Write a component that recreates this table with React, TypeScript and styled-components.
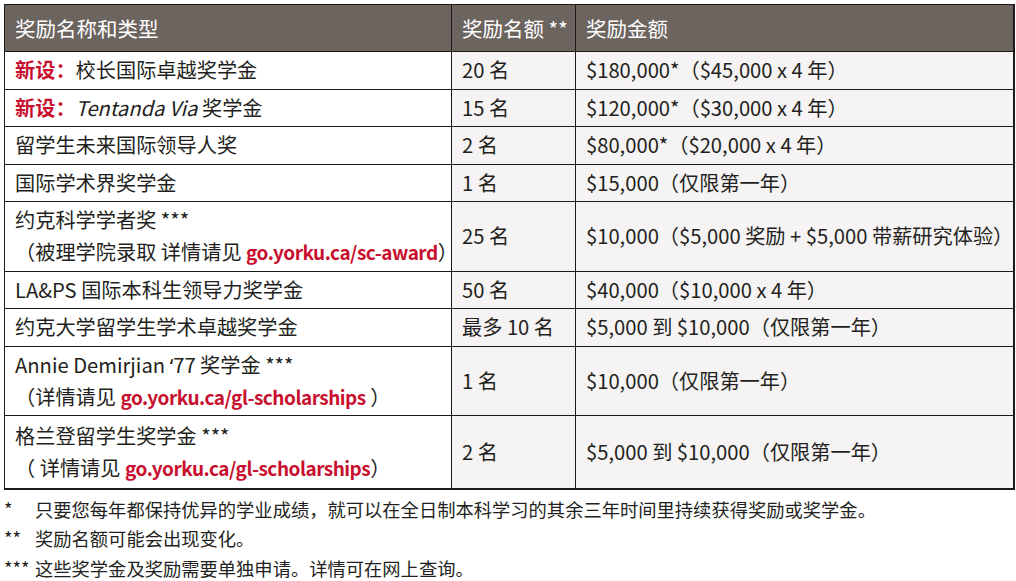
import React from "react";
import styled, { createGlobalStyle } from "styled-components";

const GlobalStyle = createGlobalStyle`
  html, body {
    margin: 0;
    padding: 0;
    background: #ffffff;
  }
  body {
    font-family: "Noto Sans CJK SC", "Noto Sans", sans-serif;
    color: #231f20;
  }
`;

const StPage = styled.main`
  padding: 4px 3px 0 4px;
`;

const StTable = styled.table`
  width: 1009px;
  border-collapse: collapse;
  table-layout: fixed;
  border-right: 2px solid #1d1a19;
  border-bottom: 2px solid #1d1a19;
`;

const StHeadCell = styled.th`
  background: #6c645f;
  color: #ffffff;
  font-weight: 400;
  font-size: 20.5px;
  line-height: 30px;
  text-align: left;
  padding: 8px 10px 8px 10px;
  border: 1px solid #1d1a19;
  white-space: nowrap;
`;

const StCell = styled.td<{ $shade?: boolean }>`
  background: ${(p) => (p.$shade ? "#f5f3f3" : "#ffffff")};
  font-size: 20.2px;
  line-height: 32px;
  padding: 2.25px 10px 2.25px 10px;
  border: 1px solid #1d1a19;
  vertical-align: middle;
  white-space: nowrap;
`;

const StNew = styled.span`
  color: #c8102e;
  font-weight: 700;
`;

const StLink = styled.span`
  color: #c8102e;
  font-weight: 700;
  font-size: 19px;
  letter-spacing: -0.5px;
`;

const StItalic = styled.em`
  font-style: italic;
`;

// latin quote mark, so it doesn't take a full-width CJK glyph
const StQuote = styled.span`
  font-family: "Noto Sans", sans-serif;
`;

const StLine = styled.div``;

const StNotes = styled.section`
  margin-top: 5px;
  display: flex;
  flex-direction: column;
`;

const StNote = styled.div`
  display: flex;
  font-size: 18.3px;
  line-height: 29.5px;
`;

const StMark = styled.span`
  width: 31px;
  flex: none;
`;

type Row = {
  name: React.ReactNode;
  count: string;
  amount: string;
  tall?: number;
};

const rows: Row[] = [
  {
    name: (
      <>
        <StNew>新设：</StNew>校长国际卓越奖学金
      </>
    ),
    count: "20 名",
    amount: "$180,000*（$45,000 x 4 年）",
  },
  {
    name: (
      <>
        <StNew>新设：</StNew>
        <StItalic>Tentanda Via</StItalic> 奖学金
      </>
    ),
    count: "15 名",
    amount: "$120,000*（$30,000 x 4 年）",
  },
  { name: "留学生未来国际领导人奖", count: "2 名", amount: "$80,000*（$20,000 x 4 年）" },
  { name: "国际学术界奖学金", count: "1 名", amount: "$15,000（仅限第一年）" },
  {
    name: (
      <>
        <StLine>约克科学学者奖 ***</StLine>
        <StLine>
          （被理学院录取 详情请见 <StLink>go.yorku.ca/sc-award</StLink>）
        </StLine>
      </>
    ),
    count: "25 名",
    amount: "$10,000（$5,000 奖励 + $5,000 带薪研究体验）",
  },
  { name: "LA&PS 国际本科生领导力奖学金", count: "50 名", amount: "$40,000（$10,000 x 4 年）" },
  { name: "约克大学留学生学术卓越奖学金", count: "最多 10 名", amount: "$5,000 到 $10,000（仅限第一年）" },
  {
    name: (
      <>
        <StLine>
          Annie Demirjian <StQuote>‘</StQuote>77 奖学金 ***
        </StLine>
        <StLine>
          （详情请见 <StLink>go.yorku.ca/gl-scholarships</StLink> ）
        </StLine>
      </>
    ),
    count: "1 名",
    amount: "$10,000（仅限第一年）",
  },
  {
    name: (
      <>
        <StLine>格兰登留学生奖学金 ***</StLine>
        <StLine>
          （ 详情请见 <StLink>go.yorku.ca/gl-scholarships</StLink>）
        </StLine>
      </>
    ),
    count: "2 名",
    amount: "$5,000 到 $10,000（仅限第一年）",
    tall: 73,
  },
];

const notes = [
  { mark: "*", text: "只要您每年都保持优异的学业成绩，就可以在全日制本科学习的其余三年时间里持续获得奖励或奖学金。" },
  { mark: "**", text: "奖励名额可能会出现变化。" },
  { mark: "***", text: "这些奖学金及奖励需要单独申请。详情可在网上查询。" },
];

export default function App() {
  return (
    <StPage>
      <GlobalStyle />
      <StTable>
        <colgroup>
          <col style={{ width: 447 }} />
          <col style={{ width: 124 }} />
          <col style={{ width: 438 }} />
        </colgroup>
        <thead>
          <tr>
            <StHeadCell>奖励名称和类型</StHeadCell>
            <StHeadCell>奖励名额 **</StHeadCell>
            <StHeadCell>奖励金额</StHeadCell>
          </tr>
        </thead>
        <tbody>
          {rows.map((row, i) => (
            <tr key={i} style={row.tall ? { height: row.tall } : undefined}>
              <StCell>{row.name}</StCell>
              <StCell $shade>{row.count}</StCell>
              <StCell $shade>{row.amount}</StCell>
            </tr>
          ))}
        </tbody>
      </StTable>
      <StNotes>
        {notes.map((n) => (
          <StNote key={n.mark}>
            <StMark>{n.mark}</StMark>
            <span>{n.text}</span>
          </StNote>
        ))}
      </StNotes>
    </StPage>
  );
}
